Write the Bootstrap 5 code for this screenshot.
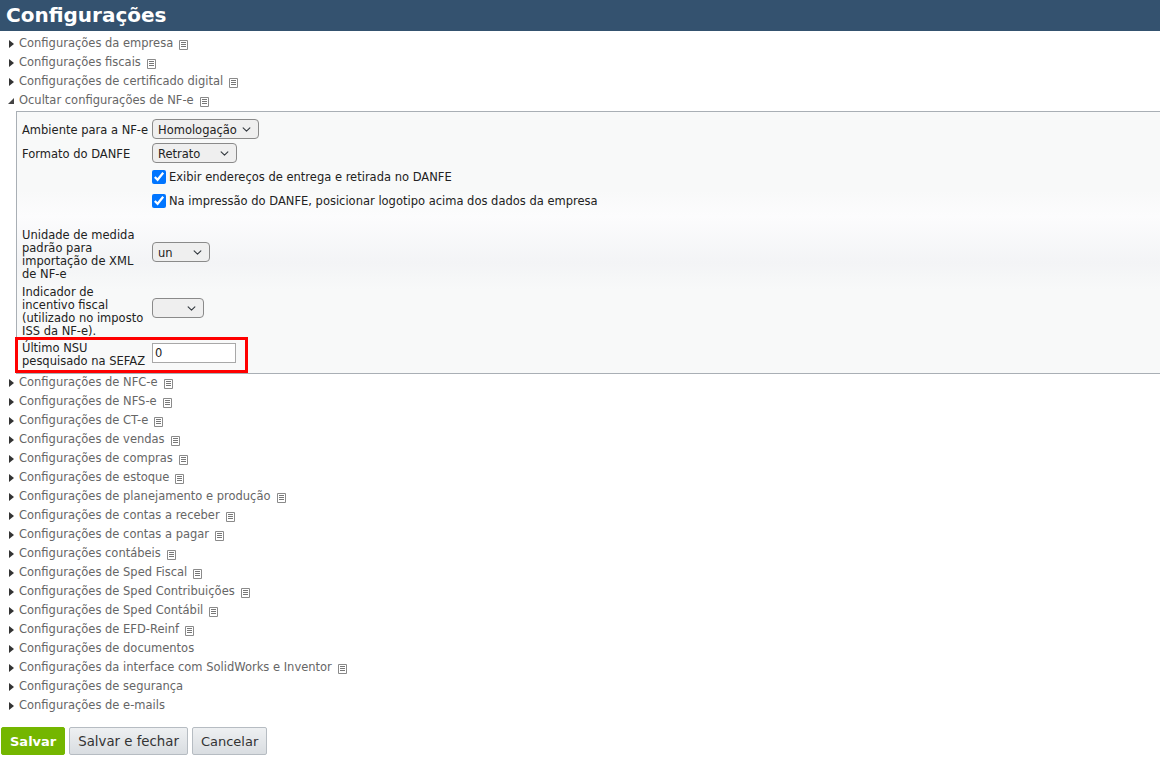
<!DOCTYPE html>
<html lang="pt-BR"><head><meta charset="utf-8"><title>Configurações</title>
<link rel="stylesheet" href="https://cdn.jsdelivr.net/npm/bootstrap@5.3.0/dist/css/bootstrap.min.css">
<style>
html,body{height:100%;overflow:hidden}
body{background:#fff;font-family:"DejaVu Sans",Verdana,sans-serif;font-size:11.5px;line-height:13px;color:#333}
.cfg-title{background:#34526f;color:#fff;font-size:20px;font-weight:700;line-height:31px;height:31px;padding-left:6px;margin:0}
.cfg-list{padding-top:3px}
.cfg-row{height:19px;display:flex;align-items:center;padding-left:9px;color:#666}
.cfg-arrow{width:0;height:0;border-style:solid;border-width:4.5px 0 4.5px 5px;border-color:transparent transparent transparent #333;margin-right:5px;flex:none}
.cfg-arrow.open{border-width:0 0 6px 6px;border-color:transparent transparent #444 transparent;margin-left:-1px;margin-right:5px}
.cfg-doc{margin-left:6px;margin-top:3px;flex:none}
.cfg-panel{position:relative;margin:1px 0 0 16px;height:263px;border:1px solid #a9afb5;border-right:0;background:linear-gradient(#f8f9f9 0,#f8f9f9 30%,#fcfcfd 40%,#f3f4f6 58%,#f8f9f9 68%,#f8f9f9 100%);padding:7px 0 0 5px;color:#222;margin-bottom:-1px}
.cfg-field{display:flex;align-items:flex-start}
.cfg-field>label{width:122px;margin-right:8px;flex:none}
.cfg-a{height:20px;align-items:center}
.cfg-b{height:20px;align-items:center;margin-top:4px}
.cfg-c{margin-top:16px;height:52px}
.cfg-d{margin-top:5px;height:52px}
.cfg-e{margin-top:4px;height:26px}
.cfg-field>label.wide{width:130px;margin-right:0;white-space:nowrap;padding-top:2px}
.cfg-e>label.nsu{width:130px;margin-right:0}
.cfg-field .form-select{font:11.5px "DejaVu Sans",Verdana,sans-serif;color:#222;border:1px solid #8a8a8a;border-radius:4px;background-color:#efefef;height:20px;min-height:0;padding:1px 18px 0 5px;margin:0;background-position:right 6px center;background-size:11px 9px;box-shadow:none}
.cfg-c .form-select{margin-top:13px}
.cfg-d .form-select{margin-top:12px}
.w-homolog{width:107px}.w-retrato{width:85px}.w-un{width:58px}.w-ind{width:52px}
.cfg-check{display:flex;align-items:center;margin-left:130px;height:24px;gap:3px}
.cfg-b + .cfg-check{margin-top:2px}
.cfg-check input{width:14px;height:14px;margin:0;accent-color:#0075ff;flex:none}
.cfg-field input[type=text]{width:84px;height:20px;margin-top:1px;border:1px solid #a8a8a8;background:#fff;padding:0 2px;font:11.5px "DejaVu Sans",Verdana,sans-serif;color:#222;border-radius:0}
.cfg-mark{position:absolute;left:-2px;top:225px;width:233px;height:36px;border:3px solid #f00;pointer-events:none}
.cfg-actions{padding:12px 0 0 1px;gap:4px}
.cfg-btn{font:13.3px/1 "DejaVu Sans",Verdana,sans-serif;height:28px;padding:1px 8px 0;border:1px solid #b6bcc2;border-radius:2px;background:linear-gradient(#eef0f2,#d9dde1);color:#333}
.cfg-btn.go{background:#74b600;border-color:#74b600;color:#fff;font-weight:700;font-size:13px}
.cfg-btn.stop{font-size:13px}
</style></head><body>
<h1 class="cfg-title">Configurações</h1>
<svg width="0" height="0" class="position-absolute"><defs><symbol id="doc" viewBox="0 0 9 10"><path d="M.5.5h8v9h-8z" fill="#fff" stroke="#8a8a8a"/><path d="M2 2.5h5M2 4.5h5M2 6.5h5" stroke="#777"/></symbol></defs></svg>
<div class="cfg-list">
<div class="cfg-row"><span class="cfg-arrow"></span>Configurações da empresa<svg class="cfg-doc" width="9" height="10"><use href="#doc"/></svg></div>
<div class="cfg-row"><span class="cfg-arrow"></span>Configurações fiscais<svg class="cfg-doc" width="9" height="10"><use href="#doc"/></svg></div>
<div class="cfg-row"><span class="cfg-arrow"></span>Configurações de certificado digital<svg class="cfg-doc" width="9" height="10"><use href="#doc"/></svg></div>
<div class="cfg-row"><span class="cfg-arrow open"></span>Ocultar configurações de NF-e<svg class="cfg-doc" width="9" height="10"><use href="#doc"/></svg></div>
<div class="cfg-panel">
 <div class="cfg-field cfg-a"><label class="wide">Ambiente para a NF-e</label><select class="form-select w-homolog"><option>Homologação</option></select></div>
 <div class="cfg-field cfg-b"><label class="wide">Formato do DANFE</label><select class="form-select w-retrato"><option>Retrato</option></select></div>
 <div class="cfg-check"><input type="checkbox" checked><span>Exibir endereços de entrega e retirada no DANFE</span></div>
 <div class="cfg-check"><input type="checkbox" checked><span>Na impressão do DANFE, posicionar logotipo acima dos dados da empresa</span></div>
 <div class="cfg-field cfg-c"><label>Unidade de medida padrão para importação de XML de NF-e</label><select class="form-select w-un"><option>un</option></select></div>
 <div class="cfg-field cfg-d"><label>Indicador de incentivo fiscal (utilizado no imposto ISS da NF-e).</label><select class="form-select w-ind"><option></option></select></div>
 <div class="cfg-field cfg-e"><label class="nsu">Último NSU pesquisado na SEFAZ</label><input type="text" value="0"></div>
 <div class="cfg-mark"></div>
</div>
<div class="cfg-row"><span class="cfg-arrow"></span>Configurações de NFC-e<svg class="cfg-doc" width="9" height="10"><use href="#doc"/></svg></div>
<div class="cfg-row"><span class="cfg-arrow"></span>Configurações de NFS-e<svg class="cfg-doc" width="9" height="10"><use href="#doc"/></svg></div>
<div class="cfg-row"><span class="cfg-arrow"></span>Configurações de CT-e<svg class="cfg-doc" width="9" height="10"><use href="#doc"/></svg></div>
<div class="cfg-row"><span class="cfg-arrow"></span>Configurações de vendas<svg class="cfg-doc" width="9" height="10"><use href="#doc"/></svg></div>
<div class="cfg-row"><span class="cfg-arrow"></span>Configurações de compras<svg class="cfg-doc" width="9" height="10"><use href="#doc"/></svg></div>
<div class="cfg-row"><span class="cfg-arrow"></span>Configurações de estoque<svg class="cfg-doc" width="9" height="10"><use href="#doc"/></svg></div>
<div class="cfg-row"><span class="cfg-arrow"></span>Configurações de planejamento e produção<svg class="cfg-doc" width="9" height="10"><use href="#doc"/></svg></div>
<div class="cfg-row"><span class="cfg-arrow"></span>Configurações de contas a receber<svg class="cfg-doc" width="9" height="10"><use href="#doc"/></svg></div>
<div class="cfg-row"><span class="cfg-arrow"></span>Configurações de contas a pagar<svg class="cfg-doc" width="9" height="10"><use href="#doc"/></svg></div>
<div class="cfg-row"><span class="cfg-arrow"></span>Configurações contábeis<svg class="cfg-doc" width="9" height="10"><use href="#doc"/></svg></div>
<div class="cfg-row"><span class="cfg-arrow"></span>Configurações de Sped Fiscal<svg class="cfg-doc" width="9" height="10"><use href="#doc"/></svg></div>
<div class="cfg-row"><span class="cfg-arrow"></span>Configurações de Sped Contribuições<svg class="cfg-doc" width="9" height="10"><use href="#doc"/></svg></div>
<div class="cfg-row"><span class="cfg-arrow"></span>Configurações de Sped Contábil<svg class="cfg-doc" width="9" height="10"><use href="#doc"/></svg></div>
<div class="cfg-row"><span class="cfg-arrow"></span>Configurações de EFD-Reinf<svg class="cfg-doc" width="9" height="10"><use href="#doc"/></svg></div>
<div class="cfg-row"><span class="cfg-arrow"></span>Configurações de documentos</div>
<div class="cfg-row"><span class="cfg-arrow"></span>Configurações da interface com SolidWorks e Inventor<svg class="cfg-doc" width="9" height="10"><use href="#doc"/></svg></div>
<div class="cfg-row"><span class="cfg-arrow"></span>Configurações de segurança</div>
<div class="cfg-row"><span class="cfg-arrow"></span>Configurações de e-mails</div>
</div>
<div class="cfg-actions d-flex">
<button class="cfg-btn go">Salvar</button><button class="cfg-btn">Salvar e fechar</button><button class="cfg-btn stop">Cancelar</button>
</div>
</body></html>
